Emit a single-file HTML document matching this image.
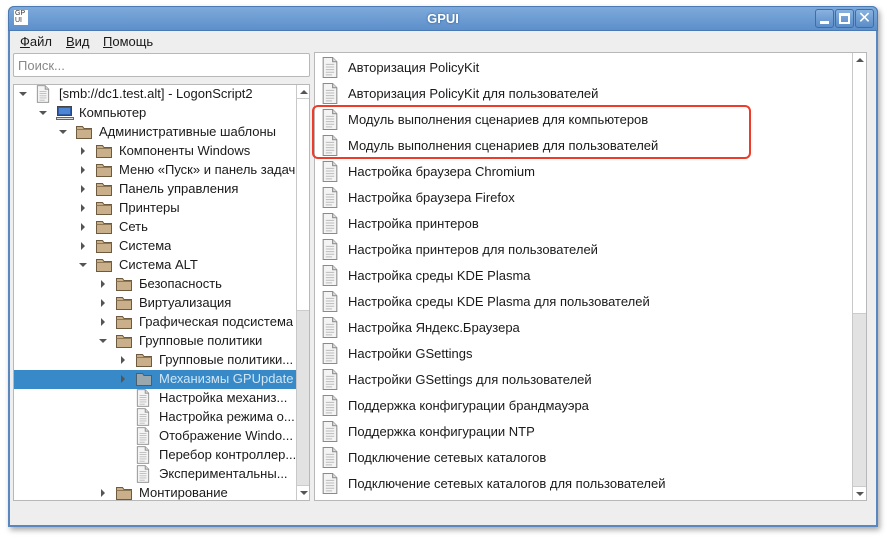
<!DOCTYPE html>
<html><head><meta charset="utf-8"><style>
*{margin:0;padding:0;box-sizing:border-box}
body{width:890px;height:540px;background:#fff;font-family:"Liberation Sans","DejaVu Sans",sans-serif;font-size:13px;color:#1a1a1a;position:relative;overflow:hidden}
.win{position:absolute;left:8px;top:6px;width:870px;height:521px;background:#eeeeee;border:2px solid #5a87be;border-top:none;border-radius:6px 6px 0 0;box-shadow:2px 3px 6px rgba(0,0,0,.35)}
.title{position:absolute;left:-2px;top:0;width:870px;height:25px;background:linear-gradient(#7eaadb,#5d8fca);border-radius:6px 6px 0 0;border:1px solid #4a79b3}
.title .t{position:absolute;left:0;right:0;top:4px;text-align:center;color:#fff;font-weight:bold;font-size:13px;text-shadow:0 0 2px #2a5a90}
.logo{position:absolute;left:5px;top:3px;width:14px;height:15px;background:#fff;font-size:7px;line-height:7px;color:#333;padding-left:1px}
.btn{position:absolute;top:2px;width:19px;height:19px;border:1px solid #3e6ea8;border-radius:3px;background:linear-gradient(#88b2e0,#5a8cc7)}
.menu{position:absolute;top:28px;font-size:13px}
.box{position:absolute;background:#fff;border:1px solid #b8b8b8}
.row{position:absolute;height:19px;line-height:20px;white-space:nowrap;overflow:hidden}
.arr{position:absolute;width:0;height:0}
.ad{border-left:4px solid transparent;border-right:4px solid transparent;border-top:4px solid #555}
.ar{border-top:4px solid transparent;border-bottom:4px solid transparent;border-left:4px solid #555}
.sb{position:absolute;width:14px;background:#e2e2e2;border-left:1px solid #c8c8c8}
.rrow{position:absolute;left:320px;height:26px;line-height:27px;white-space:nowrap}
</style></head><body>
<svg width="0" height="0" style="position:absolute">
<defs>
<symbol id="doc" viewBox="0 0 16 20"><path d="M1.5 0.5h9l4 4v15h-13z" fill="#f4f4f4" stroke="#8a8a8a"/><path d="M10.5 0.5v4h4" fill="#ddd" stroke="#8a8a8a"/><path d="M4 7h8M4 9.5h8M4 12h8M4 14.5h8M4 17h6" stroke="#bbb"/></symbol>
<symbol id="fold" viewBox="0 0 16 16"><path d="M0.5 2.5h6l1.5 2h7.5v10h-15z" fill="#c9b08a" stroke="#6e5a3e"/><path d="M0.5 5.5h15" stroke="#8f7754"/></symbol>
<symbol id="folds" viewBox="0 0 16 16"><path d="M0.5 2.5h6l1.5 2h7.5v10h-15z" fill="#9aa7ad" stroke="#4d5e6a"/></symbol>
<symbol id="pc" viewBox="0 0 18 16"><rect x="1.5" y="1.5" width="14" height="9" fill="#2f5ba8" stroke="#444"/><rect x="3" y="3" width="11" height="6" fill="#4e86d6"/><path d="M0.5 12.5h17v2h-17z" fill="#ddd" stroke="#666"/></symbol>
</defs></svg>
<div class="win">
<div class="title"><div class="logo">GP<br>UI</div><div class="t">GPUI</div>
<div class="btn" style="left:806px"><div style="position:absolute;left:4px;top:11px;width:9px;height:3px;background:#fff"></div></div>
<div class="btn" style="left:826px"><div style="position:absolute;left:3px;top:3px;width:11px;height:11px;border:2px solid #fff;border-top-width:3px"></div></div>
<div class="btn" style="left:846px;color:#fff;font-size:16px;line-height:17px;text-align:center">✕</div>
</div>
</div>
<div class="menu" style="left:20px;top:34px"><u>Ф</u>айл</div>
<div class="menu" style="left:66px;top:34px"><u>В</u>ид</div>
<div class="menu" style="left:103px;top:34px"><u>П</u>омощь</div>
<div class="box" style="left:13px;top:53px;width:297px;height:24px;border-radius:2px;color:#888;padding:4px 0 0 4px;font-size:13px">Поиск...</div>
<div class="box" style="left:13px;top:84px;width:297px;height:417px;overflow:hidden">
<div class="sb" style="left:282px;top:0;height:415px"><div style="position:absolute;left:0;top:14px;width:13px;height:212px;background:#fff;border-bottom:1px solid #ccc"></div><div style="position:absolute;left:0;top:0;width:13px;height:14px;background:#fff;border-bottom:1px solid #ccc"></div><div class="arr" style="left:3px;top:5px;border-left:4px solid transparent;border-right:4px solid transparent;border-bottom:4px solid #555"></div><div style="position:absolute;left:0;top:400px;width:13px;height:15px;background:#fff;border-top:1px solid #ccc"></div><div class="arr ad" style="left:3px;top:406px"></div></div>
<div style="position:absolute;left:0;top:285px;width:282px;height:19px;background:#3789c7"></div>
</div>
<div id="tree"></div>
<div class="box" style="left:314px;top:52px;width:553px;height:449px;overflow:hidden">
<div class="sb" style="left:537px;top:0;height:447px"><div style="position:absolute;left:0;top:0;width:13px;height:261px;background:#fff;border-bottom:1px solid #ccc"></div><div class="arr" style="left:3px;top:5px;border-left:4px solid transparent;border-right:4px solid transparent;border-bottom:4px solid #555"></div><div style="position:absolute;left:0;top:433px;width:13px;height:14px;background:#fff;border-top:1px solid #ccc"></div><div class="arr ad" style="left:3px;top:439px"></div></div>
</div>
<div id="list"></div>
<div style="position:absolute;left:312px;top:105px;width:439px;height:54px;border:2px solid #ee3b2a;border-radius:6px"></div>
<script>
var T=[[0,'d','doc','[smb://dc1.test.alt] - LogonScript2'],[1,'d','pc','Компьютер'],[2,'d','fold','Административные шаблоны'],[3,'r','fold','Компоненты Windows'],[3,'r','fold','Меню «Пуск» и панель задач'],[3,'r','fold','Панель управления'],[3,'r','fold','Принтеры'],[3,'r','fold','Сеть'],[3,'r','fold','Система'],[3,'d','fold','Система ALT'],[4,'r','fold','Безопасность'],[4,'r','fold','Виртуализация'],[4,'r','fold','Графическая подсистема'],[4,'d','fold','Групповые политики'],[5,'r','fold','Групповые политики...'],[5,'r','folds','Механизмы GPUpdate'],[5,'','doc','Настройка механиз...'],[5,'','doc','Настройка режима о...'],[5,'','doc','Отображение Windo...'],[5,'','doc','Перебор контроллер...'],[5,'','doc','Экспериментальны...'],[4,'r','fold','Монтирование']];
var h='';
T.forEach(function(t,i){var y=84+i*19;var l=t[0];var ax=20+l*20;
if(t[1]=='d')h+='<div class="arr ad" style="left:'+(ax-1)+'px;top:'+(y+8)+'px"></div>';
if(t[1]=='r')h+='<div class="arr ar" style="left:'+(ax+1)+'px;top:'+(y+6)+'px"></div>';
var ix=36+l*20;var w=t[2]=='doc'?14:(t[2]=='pc'?18:16);var hh=t[2]=='doc'?18:16;
h+='<svg style="position:absolute;left:'+ix+'px;top:'+(y+(t[2]=='doc'?1:2))+'px" width="'+w+'" height="'+hh+'"><use href="#'+t[2]+'"/></svg>';
h+='<div class="row" style="left:'+(59+l*20)+'px;top:'+y+'px;max-width:'+(236-l*20)+'px;'+(i==15?'color:#cfe6f7':'')+'">'+t[3]+'</div>';});
document.getElementById('tree').innerHTML=h;
var L=['Авторизация PolicyKit','Авторизация PolicyKit для пользователей','Модуль выполнения сценариев для компьютеров','Модуль выполнения сценариев для пользователей','Настройка браузера Chromium','Настройка браузера Firefox','Настройка принтеров','Настройка принтеров для пользователей','Настройка среды KDE Plasma','Настройка среды KDE Plasma для пользователей','Настройка Яндекс.Браузера','Настройки GSettings','Настройки GSettings для пользователей','Поддержка конфигурации брандмауэра','Поддержка конфигурации NTP','Подключение сетевых каталогов','Подключение сетевых каталогов для пользователей'];
h='';L.forEach(function(s,i){var y=54+i*26;
h+='<svg style="position:absolute;left:321px;top:'+(y+3)+'px" width="18" height="21"><use href="#doc"/></svg>';
h+='<div class="rrow" style="left:348px;top:'+y+'px">'+s+'</div>';});
document.getElementById('list').innerHTML=h;
</script>
</body></html>
